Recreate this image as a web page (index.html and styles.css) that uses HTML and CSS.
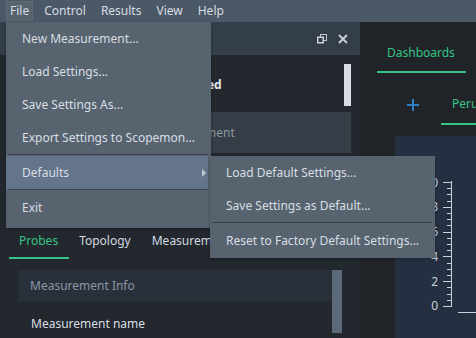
FILE: index.html
```html
<!DOCTYPE html>
<html lang="en">
<head>
    <meta charset="UTF-8">
    <title>Measurement Control</title>
    <link rel="stylesheet" href="styles.css">
</head>
<body>
    <!-- Menu bar -->
    <div class="menubar">
        <span class="menu-title open">File</span>
        <span class="menu-title">Control</span>
        <span class="menu-title">Results</span>
        <span class="menu-title">View</span>
        <span class="menu-title">Help</span>
    </div>

    <div class="workspace">
        <!-- Left dock -->
        <aside class="dock">
            <div class="dock-title">
                <span class="dock-name">Measurement Control</span>
                <span class="dock-buttons">
                    <svg width="10" height="10" viewBox="0 0 10 10">
                        <rect x="3.5" y="0.5" width="6" height="6" fill="none" stroke="#bfc7cf"/>
                        <rect x="0.75" y="3.25" width="5.5" height="5.5" fill="#343e49" stroke="#c8cfd6" stroke-width="1.5"/>
                    </svg>
                    <svg width="10" height="10" viewBox="0 0 10 10">
                        <path d="M1 1 L9 9 M9 1 L1 9" stroke="#c8cfd6" stroke-width="2"/>
                    </svg>
                </span>
            </div>
            <div class="dock-body">
                <div class="status-top">
                    <div class="status-text">Measurement Not Started</div>
                    <div class="status-thumb"></div>
                </div>
                <div class="status-box">Start Measurement</div>

                <div class="tabs">
                    <span class="tab active">Probes</span>
                    <span class="tab">Topology</span>
                    <span class="tab">Measurement</span>
                </div>

                <div class="probe-panel">
                    <div class="probe-content">
                        <div class="probe-header">Measurement Info</div>
                        <div class="probe-field">Measurement name</div>
                    </div>
                    <div class="probe-scroll"></div>
                </div>
            </div>
        </aside>

        <!-- Dashboards -->
        <main class="dash">
            <div class="dash-tabs">
                <span class="dash-tab">Dashboards</span>
            </div>
            <div class="board-tabs">
                <span class="add-board">
                    <svg width="12" height="12" viewBox="0 0 12 12">
                        <path d="M6 0 V12 M0 6 H12" stroke="#2f7ec4" stroke-width="2"/>
                    </svg>
                </span>
                <span class="board-tab">Peru</span>
            </div>
            <div class="chart">
                <svg width="81" height="202" viewBox="0 0 81 202">
                    <g fill="#c9d1da" font-family="Noto Sans" font-size="12" text-anchor="end">
                        <text x="43" y="51">10</text>
                        <text x="43" y="75">8</text>
                        <text x="43" y="100">6</text>
                        <text x="43" y="125">4</text>
                        <text x="43" y="150">2</text>
                        <text x="43" y="174">0</text>
                    </g>
                    <g stroke="#c9d1da" stroke-width="1" id="axis"></g>
                    <line x1="63" y1="176.5" x2="81" y2="176.5" stroke="#c9d1da"/>
                </svg>
            </div>
        </main>
    </div>

    <!-- File menu popup -->
    <div class="popup file-menu">
        <div class="item">New Measurement...</div>
        <div class="item">Load Settings...</div>
        <div class="item">Save Settings As...</div>
        <div class="item">Export Settings to Scopemon...</div>
        <div class="sep"></div>
        <div class="item hover">Defaults<span class="arrow"></span></div>
        <div class="sep"></div>
        <div class="item">Exit</div>
    </div>

    <!-- Defaults submenu -->
    <div class="popup sub-menu">
        <div class="item">Load Default Settings...</div>
        <div class="item">Save Settings as Default...</div>
        <div class="sep"></div>
        <div class="item">Reset to Factory Default Settings...</div>
    </div>

    <script>
        // axis ticks: major every 2 units, minor every 0.5
        const axis = document.getElementById('axis');
        let svg = '<line x1="56.5" y1="45" x2="56.5" y2="170.5"/>';
        for (let i = 0; i <= 20; i++) {
            const y = Math.round(170 - i * 6.2) + 0.5;
            const x1 = i % 4 === 0 ? 48 : 52;
            svg += `<line x1="${x1}" y1="${y}" x2="57" y2="${y}"/>`;
        }
        axis.innerHTML = svg;
    </script>
</body>
</html>
```

FILE: styles.css
```css
/* Base */
html, body {
    margin: 0;
    padding: 0;
    height: 100%;
}

body {
    font-family: 'Noto Sans', sans-serif;
    font-size: 12px;
    color: #d6dce2;
    background-color: #202428;
    overflow: hidden;
    display: flex;
    flex-direction: column;
}

/* Menu bar */
.menubar {
    height: 22px;
    background-color: #4b5866;
    display: flex;
    align-items: center;
    padding-left: 6px;
    flex-shrink: 0;
}

.menu-title {
    padding: 0 7px 0 8px;
    line-height: 20px;
    color: #d6dce3;
}

.menu-title.open {
    background-color: #56636f;
    box-shadow: inset 0 0 0 1px #5d6a77;
    padding: 0 4px;
    margin-right: 3px;
}

/* Layout */
.workspace {
    flex: 1;
    display: flex;
    min-height: 0;
}

.dock {
    width: 360px;
    flex-shrink: 0;
    background-color: #23272e;
    display: flex;
    flex-direction: column;
}

.dock-title {
    height: 33px;
    background-color: #343e49;
    display: flex;
    align-items: center;
    justify-content: space-between;
    padding: 0 12px 0 10px;
}

.dock-name {
    color: #c9d0d8;
}

.dock-buttons {
    display: flex;
    gap: 11px;
    align-items: center;
}

.dock-buttons svg {
    display: block;
}

/* Status area */
.status-top {
    display: flex;
    height: 42px;
    margin-top: 9px;
    padding: 0 9px 0 9px;
}

.status-text {
    flex: 1;
    font-weight: bold;
    color: #e6eaee;
    line-height: 42px;
    padding-left: 56px;
}

.status-thumb {
    width: 7px;
    background-color: #d8dde3;
}

.status-box {
    height: 41px;
    margin: 6px 9px 0 9px;
    background-color: #353d46;
    color: #8e99a4;
    line-height: 41px;
    padding-left: 117px;
}

/* Tabs */
.tabs {
    display: flex;
    margin: 76px 0 0 9px;
}

.tab {
    padding: 3px 11px 7px 10px;
    line-height: 18px;
    border-bottom: 2px solid transparent;
    color: #d2d9e0;
}

.tab.active {
    color: #35c486;
    border-bottom-color: #35c486;
}

.probe-panel {
    flex: 1;
    display: flex;
    margin: 11px 18px 0 18px;
}

.probe-content {
    flex: 1;
}

.probe-header {
    height: 32px;
    line-height: 32px;
    background-color: #2a303a;
    color: #8896a6;
    padding-left: 12px;
}

.probe-field {
    padding: 13px 0 0 13px;
    line-height: 18px;
    color: #d8dee4;
}

.probe-scroll {
    width: 10px;
    background-color: #5b6978;
}

/* Dashboards */
.dash {
    flex: 1;
    display: flex;
    flex-direction: column;
    background-color: #202428;
    min-width: 0;
}

.dash-tabs {
    display: flex;
    padding-left: 17px;
}

.dash-tab {
    padding: 22px 11px 9px 10px;
    line-height: 18px;
    color: #35c486;
    border-bottom: 2px solid #35c486;
}

.board-tabs {
    display: flex;
    align-items: flex-end;
    padding-left: 47px;
    white-space: nowrap;
}

.add-board {
    padding-bottom: 14px;
}

.add-board svg {
    display: block;
}

.board-tab {
    margin-left: 22px;
    padding: 22px 0 10px 11px;
    line-height: 18px;
    color: #35c486;
    border-bottom: 2px solid #35c486;
    flex: 1;
    overflow: hidden;
}

.chart {
    flex: 1;
    margin: 11px 0 0 35px;
    background-color: #243042;
}

.chart svg {
    display: block;
}

/* Popup menus */
.popup {
    position: absolute;
    background-color: #57636f;
    box-shadow: 0 1px 3px rgba(0, 0, 0, 0.25);
}

.file-menu {
    left: 6px;
    top: 22px;
    width: 205px;
    padding-bottom: 4px;
}

.sub-menu {
    left: 210px;
    top: 156px;
    width: 225px;
    padding-bottom: 1px;
}

.item {
    height: 33px;
    line-height: 33px;
    padding-left: 16px;
    color: #d8dee4;
    position: relative;
    white-space: nowrap;
}

.item.hover {
    background-color: #64748a;
    margin-right: 3px;
}

.arrow {
    position: absolute;
    right: 2px;
    top: 13px;
    border-left: 4px solid #c2cad2;
    border-top: 4px solid transparent;
    border-bottom: 4px solid transparent;
}

.sep {
    height: 1px;
    background-color: #3b444e;
    margin: 0 3px 1px 2px;
}
```
